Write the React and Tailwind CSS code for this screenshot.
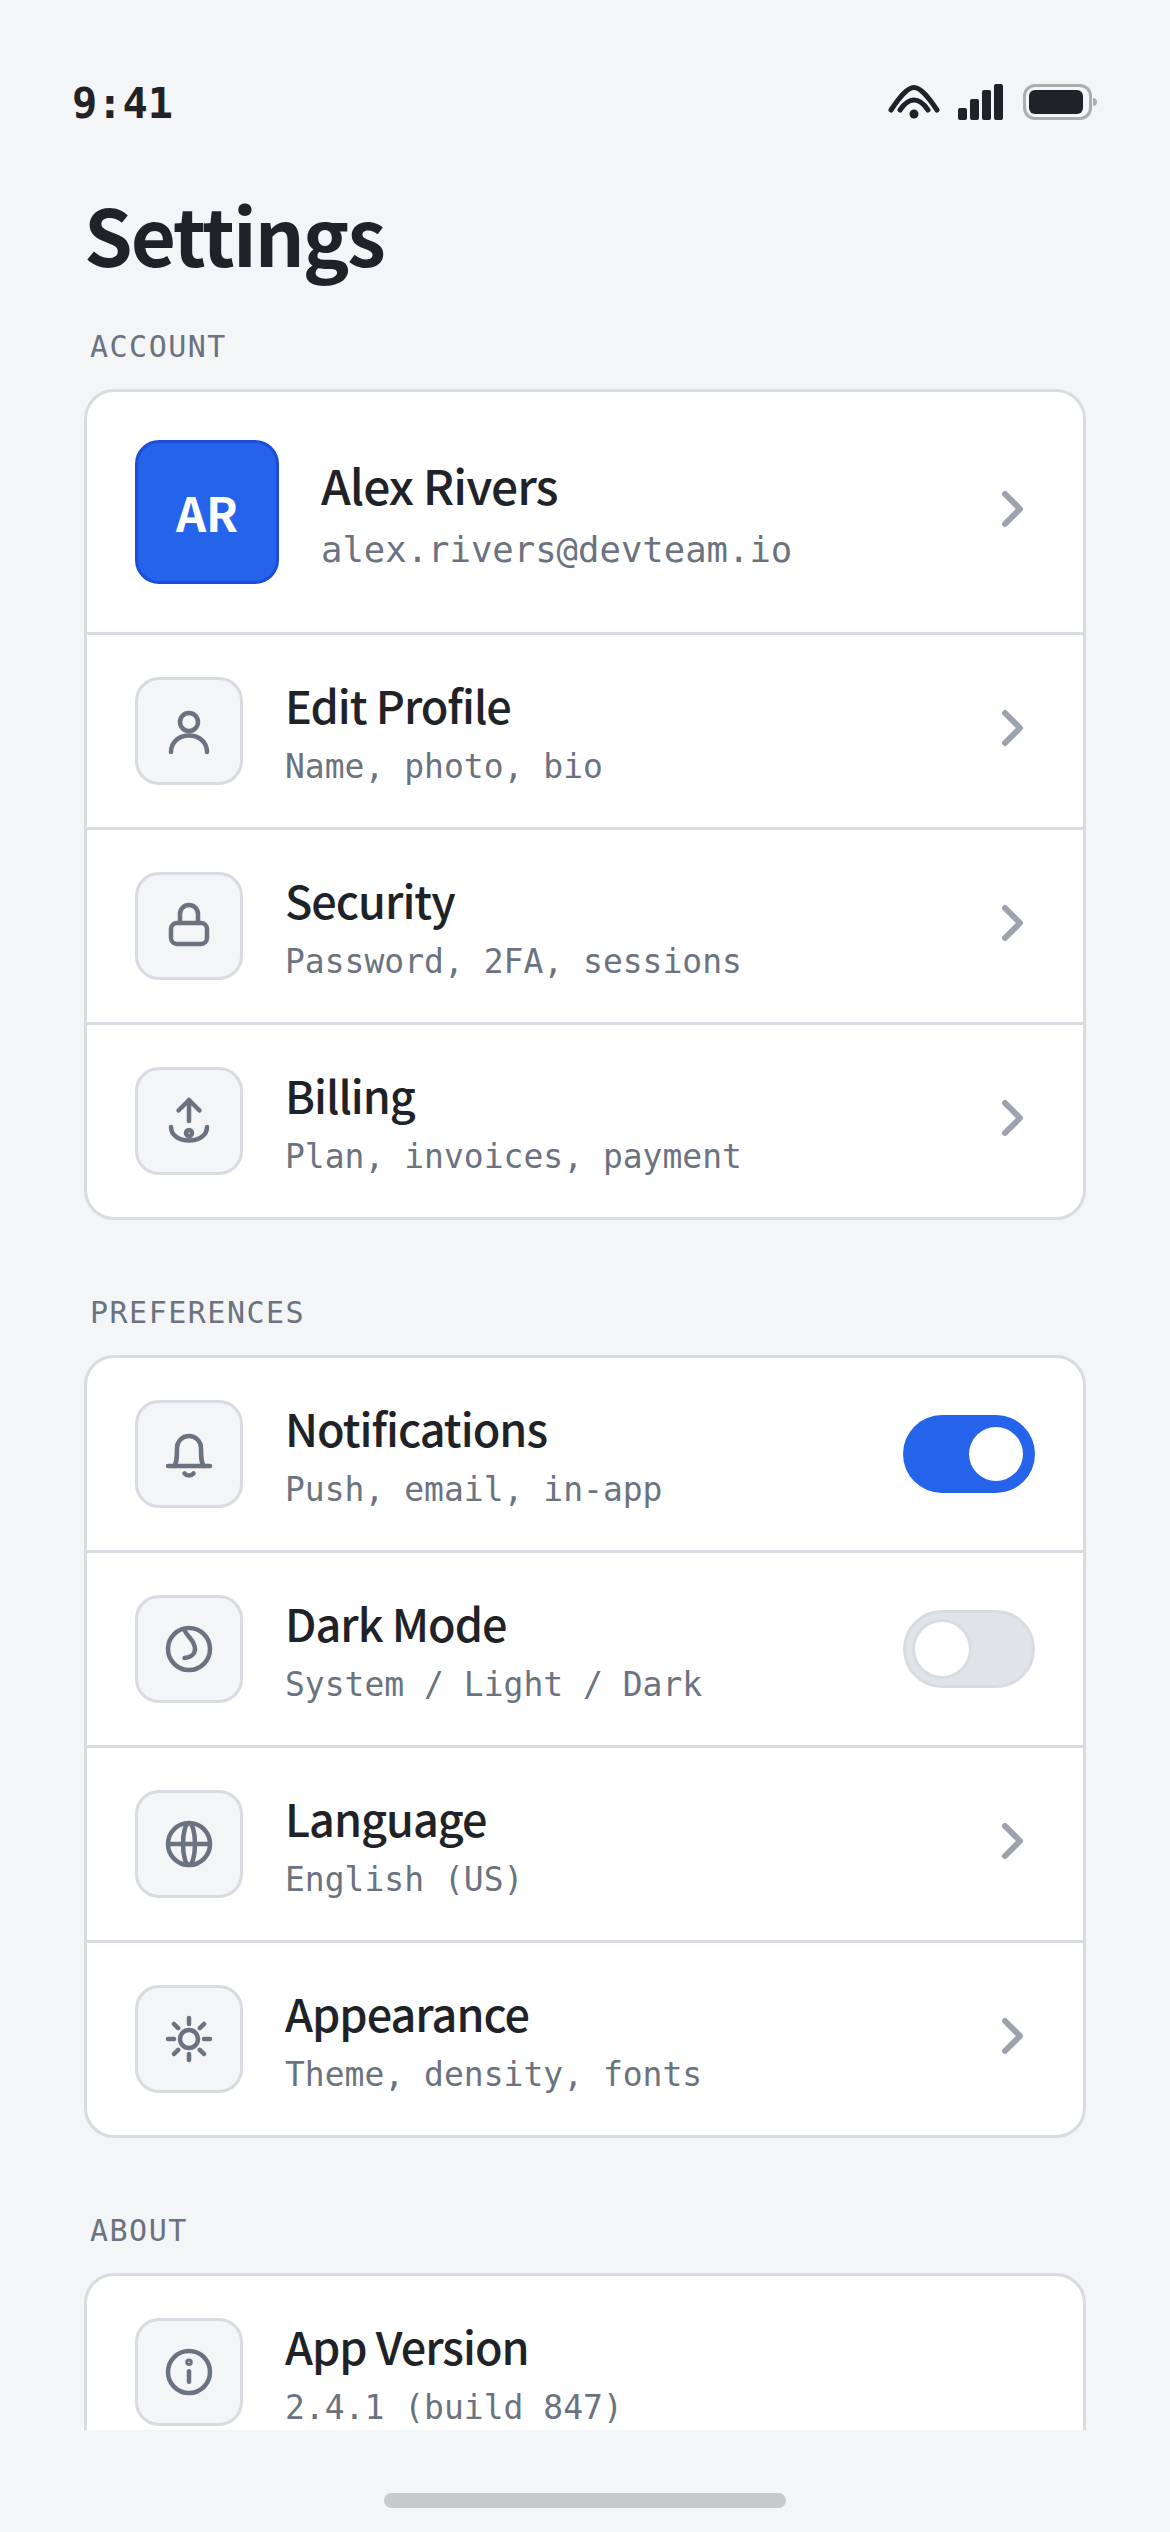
function Icon({ children }) {
  return (
    <svg
      width="54"
      height="54"
      viewBox="0 0 18 18"
      fill="none"
      stroke="#6b7280"
      strokeWidth="1.5"
      strokeLinecap="round"
      strokeLinejoin="round"
    >
      {children}
    </svg>
  );
}

const icons = {
  user: (
    <>
      <circle cx="9" cy="6" r="3" />
      <path d="M3 16c0-3.3 2.7-5.5 6-5.5s6 2.2 6 5.5" />
    </>
  ),
  lock: (
    <>
      <rect x="3" y="8" width="12" height="7" rx="2" />
      <path d="M6 8V5a3 3 0 0 1 6 0v3" />
    </>
  ),
  billing: (
    <>
      <path d="M9 2v7M5.5 5.5 9 2l3.5 3.5" />
      <path d="M3 11c0 2.8 2.7 4.5 6 4.5s6-1.7 6-4.5" />
      <circle cx="9" cy="13" r="1" />
    </>
  ),
  bell: (
    <>
      <path d="M2 13h14" />
      <path d="M4 13c1-1 1-3 1-6a4 4 0 0 1 8 0c0 3 0 5 1 6" />
      <path d="M7.5 15.500a2 2 0 0 0 3 0" />
    </>
  ),
  moon: (
    <>
      <circle cx="9" cy="9" r="7" />
      <path d="M7.500 2.500c.3 2 3.500 3.500 3.500 6.500 0 1.500-1.200 2.800-3.500 3" />
    </>
  ),
  globe: (
    <>
      <circle cx="9" cy="9" r="7" />
      <ellipse cx="9" cy="9" rx="2" ry="7" />
      <path d="M2 9h14" />
    </>
  ),
  sun: (
    <>
      <circle cx="9" cy="9" r="3" />
      <path d="M9 2v2M9 14v2M2 9h2M14 9h2M4 4l1.400 1.400M12.600 12.600 14 14M4 14l1.400-1.400M12.600 5.400 14 4" />
    </>
  ),
  info: (
    <>
      <circle cx="9" cy="9" r="7" />
      <path d="M9 8.750v3.500" />
      <circle cx="9" cy="5.750" r="0.500" />
    </>
  ),
};

function Chevron() {
  return (
    <svg
      width="48"
      height="48"
      viewBox="0 0 16 16"
      fill="none"
      stroke="#9ca3af"
      strokeWidth="2"
      strokeLinecap="round"
      strokeLinejoin="round"
      className="shrink-0 -translate-y-[3px]"
    >
      <path d="M6 3l5 5-5 5" />
    </svg>
  );
}

function Toggle({ on }) {
  if (on) {
    return (
      <div className="w-[132px] h-[78px] rounded-full bg-[#2563eb] flex items-center justify-end pr-[12px] shrink-0">
        <div className="w-[54px] h-[54px] rounded-full bg-white" />
      </div>
    );
  }
  return (
    <div className="w-[132px] h-[78px] rounded-full bg-[#e0e3e8] border-[3px] border-[#d8dbe2] flex items-center pl-[9px] shrink-0">
      <div className="w-[54px] h-[54px] rounded-full bg-white ring-[3px] ring-[#d8dbe2]" />
    </div>
  );
}

function Row({ icon, title, sub, right }) {
  return (
    <div className="flex items-center gap-[42px] px-[48px] py-[42px] h-[195px] border-b-[3px] border-[#d8dbe2] last:border-b-0 last:h-[192px]">
      <div className="w-[108px] h-[108px] shrink-0 rounded-[24px] bg-[#f4f5f7] border-[3px] border-[#d8dbe2] flex items-center justify-center">
        <Icon>{icons[icon]}</Icon>
      </div>
      <div className="flex-1 min-w-0 pt-[3px]">
        <div className="text-[45px] leading-[54px] font-medium tracking-[-1px] text-[#1f2328]">{title}</div>
        <div className="text-[33px] leading-[42px] mt-[14px] text-[#6b7280] font-['DejaVu_Sans_Mono',monospace]">
          {sub}
        </div>
      </div>
      {right === undefined ? <Chevron /> : right}
    </div>
  );
}

function SectionLabel({ children }) {
  return (
    <div className="pl-[6px] text-[30px] leading-[36px] tracking-[1.500px] text-[#6b7280] font-['DejaVu_Sans_Mono',monospace]">
      {children}
    </div>
  );
}

function Card({ children, clipped }) {
  return (
    <div
      className={
        clipped
          ? "mt-[24px] h-[300px] bg-white rounded-t-[30px] border-x-[3px] border-t-[3px] border-[#d8dbe2] overflow-hidden"
          : "mt-[24px] bg-white rounded-[30px] border-[3px] border-[#d8dbe2] overflow-hidden"
      }
    >
      {children}
    </div>
  );
}

export default function App() {
  return (
    <div className="w-[1170px] h-[2532px] bg-[#f4f5f7] font-['Noto_Sans_CJK_SC',sans-serif] flex flex-col overflow-hidden">
      <div className="h-[132px] shrink-0 pl-[72px] pr-[70px] pt-[74px] flex justify-between items-start">
        <span className="text-[42px] leading-[60px] font-bold text-[#1f2328] font-['DejaVu_Sans_Mono',monospace]">
          9:41
        </span>
        <svg width="215" height="36" viewBox="0 0 215 36" className="mt-[10px]">
          <g fill="none" stroke="#1f2328" strokeWidth="5" strokeLinecap="round">
            <path d="M6 26C14 14 22 3.500 29 3.500s15 10.500 23 22.500" />
            <path d="M15 26c4-6 9-10 14-10s10 4 14 10" />
          </g>
          <circle cx="29" cy="30" r="4.500" fill="#1f2328" />
          <rect x="73" y="24" width="9" height="12" rx="2" fill="#1f2328" />
          <rect x="85" y="15" width="9" height="21" rx="2" fill="#1f2328" />
          <rect x="97" y="6" width="9" height="30" rx="2" fill="#1f2328" />
          <rect x="109" y="0" width="9" height="36" rx="2" fill="#1f2328" />
          <rect x="139.500" y="1.500" width="66" height="33" rx="10.500" fill="none" stroke="#adadad" strokeWidth="3" />
          <rect x="144" y="6" width="54" height="24" rx="6" fill="#1f2328" />
          <path d="M208 14c2.500 0 4 1.500 4 4s-1.500 4-4 4z" fill="#adadad" />
        </svg>
      </div>

      <div className="flex-1 min-h-0 overflow-hidden px-[84px]">
        <h1 className="text-[78px] leading-[96px] font-bold tracking-[-2px] text-[#1f2328] mt-[53px]">Settings</h1>
        <div className="mt-[48px]">
          <SectionLabel>ACCOUNT</SectionLabel>
          <Card>
            <div className="flex items-center gap-[42px] p-[48px] border-b-[3px] border-[#d8dbe2]">
              <div className="w-[144px] h-[144px] shrink-0 rounded-[24px] bg-[#2563eb] border-[3px] border-[#1d4ed8] flex items-center justify-center text-white font-bold text-[47px]">
                AR
              </div>
              <div className="flex-1 min-w-0 pt-[3px]">
                <div className="text-[48px] leading-[60px] font-medium tracking-[-1px] text-[#1f2328]">Alex Rivers</div>
                <div className="text-[35.600px] leading-[48px] mt-[12px] text-[#6b7280] font-['DejaVu_Sans_Mono',monospace]">
                  alex.rivers@devteam.io
                </div>
              </div>
              <Chevron />
            </div>
            <Row icon="user" title="Edit Profile" sub="Name, photo, bio" />
            <Row icon="lock" title="Security" sub="Password, 2FA, sessions" />
            <Row icon="billing" title="Billing" sub="Plan, invoices, payment" />
          </Card>
        </div>
        <div className="mt-[75px]">
          <SectionLabel>PREFERENCES</SectionLabel>
          <Card>
            <Row icon="bell" title="Notifications" sub="Push, email, in-app" right={<Toggle on />} />
            <Row icon="moon" title="Dark Mode" sub="System / Light / Dark" right={<Toggle />} />
            <Row icon="globe" title="Language" sub="English (US)" />
            <Row icon="sun" title="Appearance" sub="Theme, density, fonts" />
          </Card>
        </div>
        <div className="mt-[75px]">
          <SectionLabel>ABOUT</SectionLabel>
          <Card clipped>
            <Row icon="info" title="App Version" sub="2.4.1 (build 847)" right={null} />
          </Card>
        </div>
      </div>

      <div className="h-[102px] shrink-0 flex justify-center pt-[63px]">
        <div className="w-[402px] h-[15px] rounded-full bg-[#c8c9cc]" />
      </div>
    </div>
  );
}
